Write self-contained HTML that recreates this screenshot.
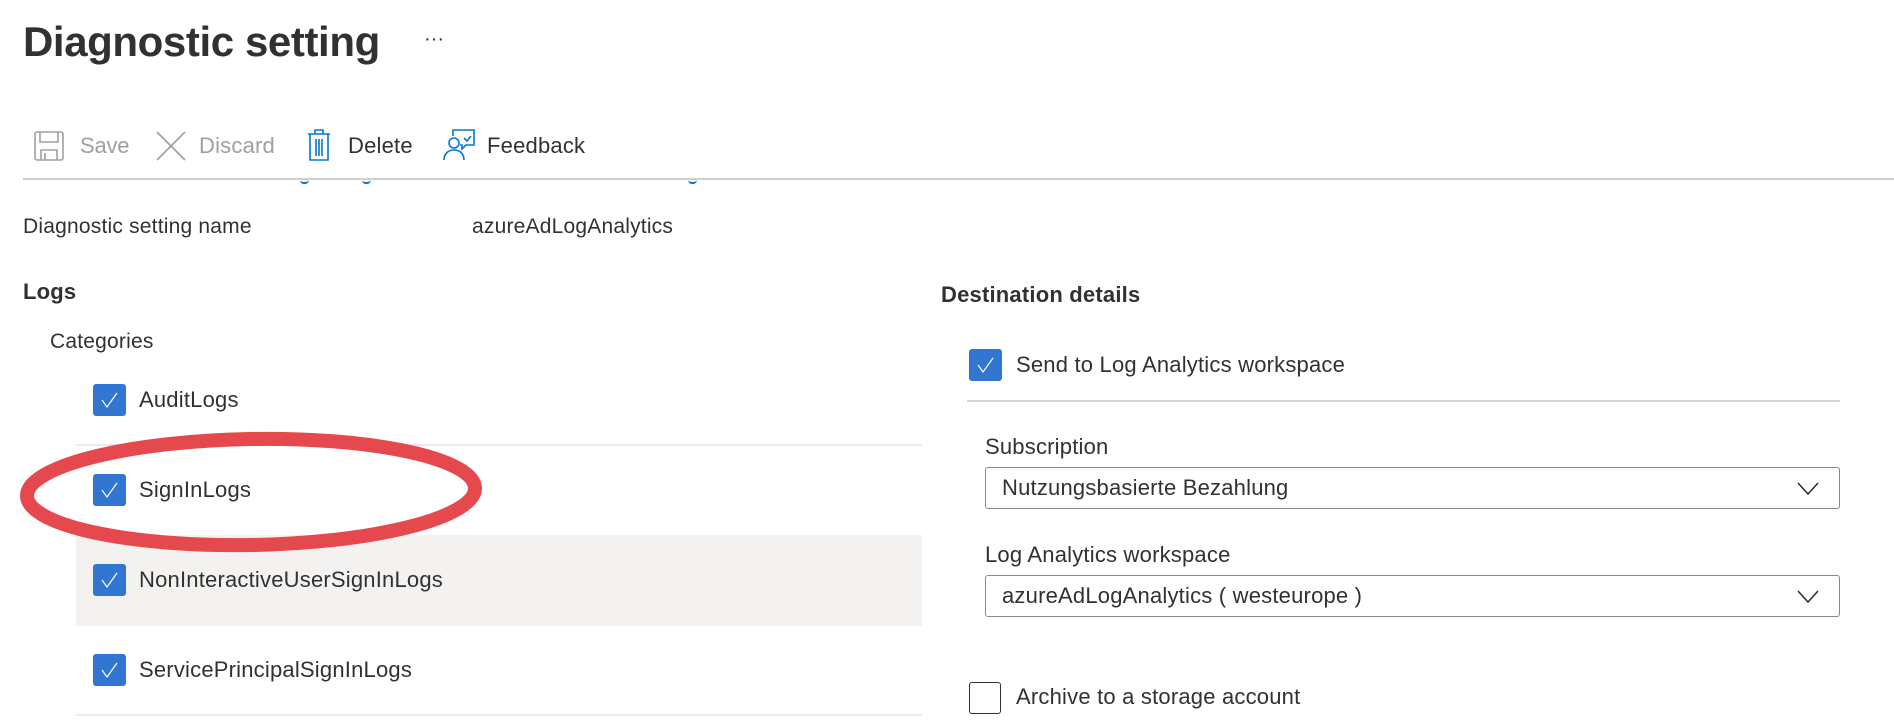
<!DOCTYPE html>
<html><head><meta charset="utf-8"><style>
*{margin:0;padding:0;box-sizing:border-box}
body{width:1894px;height:720px;background:#fff;position:relative;overflow:hidden;font-family:"Liberation Sans",Arial,sans-serif;color:#323130}
.a{position:absolute;white-space:nowrap}
.t{font-size:22px;letter-spacing:0.2px;line-height:1}
.cb{position:absolute;width:33px;height:32px;background:#3177d2;border-radius:3px}
.cb svg{position:absolute;left:7px;top:8px}
.ub{position:absolute;width:32px;height:32px;border:1.5px solid #323130;border-radius:3px}
.dd{position:absolute;left:985px;width:855px;height:42px;border:1.5px solid #8a8886;border-radius:3px}
.dd span{position:absolute;left:16px;top:9px}
.dd svg{position:absolute;right:20px;top:14px}
</style></head><body>
<div class="a" style="left:23px;top:18px;font-size:42px;font-weight:bold;letter-spacing:-0.4px">Diagnostic setting</div>
<div class="a" style="left:424px;top:28px;font-size:20px;color:#323130">···</div>

<svg class="a" style="left:34px;top:131px" width="30" height="30" viewBox="0 0 30 30" fill="none" stroke="#a19f9d" stroke-width="1.6"><rect x="1" y="1" width="28" height="28" rx="2"/><path d="M6 1v10h18V1M7 29V19h16v10M11 22v7"/></svg>
<div class="a t" style="left:80px;top:135px;color:#a19f9d;letter-spacing:-0.2px">Save</div>
<svg class="a" style="left:155px;top:130px" width="32" height="32" viewBox="0 0 32 32" stroke="#a19f9d" stroke-width="1.6"><path d="M2 2L30 30M30 2L2 30"/></svg>
<div class="a t" style="left:199px;top:135px;color:#a19f9d">Discard</div>
<svg class="a" style="left:307px;top:129px" width="24" height="32" viewBox="0 0 24 32" fill="none" stroke="#0078d4" stroke-width="1.6"><path d="M1 5h22M8 5V1h8v4M3 5v26h18V5M9 10v17M12 10v17M15 10v17"/></svg>
<div class="a t" style="left:348px;top:135px">Delete</div>
<svg class="a" style="left:443px;top:129px" width="32" height="32" viewBox="0 0 32 32" fill="none" stroke="#0078d4" stroke-width="1.6"><path d="M10 7V1h21v15h-8l-4 4v-4h-2"/><circle cx="11" cy="14" r="5"/><path d="M1 31c0-6 4-10 10-10s10 4 10 10"/><path d="M21 9l3 3 4-5"/></svg>
<div class="a t" style="left:487px;top:135px">Feedback</div>
<div class="a" style="left:23px;top:178px;width:1871px;height:1.5px;background:#d2d0ce"></div>
<div class="a" style="left:300px;top:180px;width:9px;height:4px;border-bottom:2px solid #0078d4;border-radius:0 0 5px 5px"></div>
<div class="a" style="left:362px;top:180px;width:9px;height:4px;border-bottom:2px solid #0078d4;border-radius:0 0 5px 5px"></div>
<div class="a" style="left:688px;top:180px;width:9px;height:4px;border-bottom:2px solid #0078d4;border-radius:0 0 5px 5px"></div>

<div class="a t" style="left:23px;top:216px;font-size:21px">Diagnostic setting name</div>
<div class="a t" style="left:472px;top:216px;font-size:21px">azureAdLogAnalytics</div>
<div class="a t" style="left:23px;top:281px;font-weight:bold;font-size:22px">Logs</div>
<div class="a t" style="left:941px;top:284px;font-weight:bold;font-size:22px">Destination details</div>
<div class="a t" style="left:50px;top:331px;font-size:21px">Categories</div>

<div class="a" style="left:76px;top:444px;width:846px;height:1.5px;background:#edebe9"></div>
<div class="a" style="left:76px;top:535px;width:846px;height:91px;background:#f3f2f1"></div>
<div class="a" style="left:76px;top:714px;width:846px;height:1.5px;background:#edebe9"></div>

<div class="cb" style="left:93px;top:384px"><svg width="19" height="16" viewBox="0 0 19 16" fill="none" stroke="#fff" stroke-width="1.2"><path d="M2 8l5 7L17 1"/></svg></div>
<div class="a t" style="left:139px;top:389px">AuditLogs</div>
<div class="cb" style="left:93px;top:474px"><svg width="19" height="16" viewBox="0 0 19 16" fill="none" stroke="#fff" stroke-width="1.2"><path d="M2 8l5 7L17 1"/></svg></div>
<div class="a t" style="left:139px;top:479px">SignInLogs</div>
<div class="cb" style="left:93px;top:564px"><svg width="19" height="16" viewBox="0 0 19 16" fill="none" stroke="#fff" stroke-width="1.2"><path d="M2 8l5 7L17 1"/></svg></div>
<div class="a t" style="left:139px;top:569px">NonInteractiveUserSignInLogs</div>
<div class="cb" style="left:93px;top:654px"><svg width="19" height="16" viewBox="0 0 19 16" fill="none" stroke="#fff" stroke-width="1.2"><path d="M2 8l5 7L17 1"/></svg></div>
<div class="a t" style="left:139px;top:659px">ServicePrincipalSignInLogs</div>

<svg class="a" style="left:0;top:420px" width="510" height="150"><ellipse cx="251" cy="72" rx="224" ry="53" fill="none" stroke="#e5484d" stroke-width="14" transform="rotate(-1 251 72)"/></svg>

<div class="cb" style="left:969px;top:349px"><svg width="19" height="16" viewBox="0 0 19 16" fill="none" stroke="#fff" stroke-width="1.2"><path d="M2 8l5 7L17 1"/></svg></div>
<div class="a t" style="left:1016px;top:354px">Send to Log Analytics workspace</div>
<div class="a" style="left:967px;top:400px;width:873px;height:2px;background:#d6d6d6"></div>
<div class="a t" style="left:985px;top:436px">Subscription</div>
<div class="dd" style="top:467px"><span class="t">Nutzungsbasierte Bezahlung</span><svg width="22" height="13" viewBox="0 0 22 13" fill="none" stroke="#323130" stroke-width="1.6"><path d="M1 1l10 11L21 1"/></svg></div>
<div class="a t" style="left:985px;top:544px">Log Analytics workspace</div>
<div class="dd" style="top:575px"><span class="t">azureAdLogAnalytics ( westeurope )</span><svg width="22" height="13" viewBox="0 0 22 13" fill="none" stroke="#323130" stroke-width="1.6"><path d="M1 1l10 11L21 1"/></svg></div>
<div class="ub" style="left:969px;top:682px"></div>
<div class="a t" style="left:1016px;top:686px">Archive to a storage account</div>
</body></html>
